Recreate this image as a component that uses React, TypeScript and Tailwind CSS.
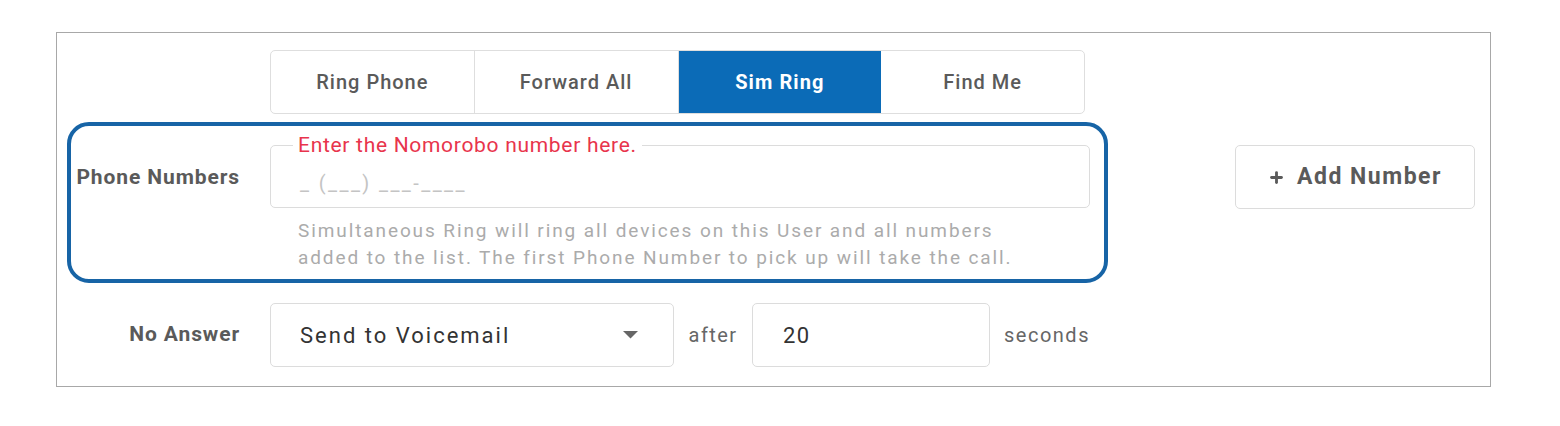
import { Plus } from "lucide-react";

const tabs = ["Ring Phone", "Forward All", "Sim Ring", "Find Me"];

export default function App() {
  return (
    <div className="min-h-screen bg-white pl-[56px] pt-[32px] font-['Roboto',sans-serif]">
      <div className="w-[1435px] h-[355px] border border-[#a8a8a8] bg-white">
        {/* Tabs */}
        <div className="mt-[17px] ml-[213px] flex w-[815px] h-[64px] rounded-[5px] border border-[#dedede] overflow-hidden">
          {tabs.map((t) => (
            <div
              key={t}
              className={
                t === "Sim Ring"
                  ? "flex-1 flex items-center justify-center bg-[#0b6bb7] text-white font-bold text-[20px] tracking-[1.1px]"
                  : "flex-1 flex items-center justify-center border-r border-[#dedede] last:border-r-0 text-[#5a5a5a] font-medium text-[20px] tracking-[1px]"
              }
            >
              {t}
            </div>
          ))}
        </div>

        {/* Phone numbers */}
        <div className="mt-[8px] flex items-start">
          <div className="ml-[10px] w-[1041px] h-[161px] rounded-[22px] border-[4px] border-[#1764a6] flex">
            <div className="w-[169px] pt-[36px] text-right text-[21px] font-bold tracking-[0.9px] text-[#5a5a5a]">
              Phone Numbers
            </div>
            <div className="ml-[30px] pt-[19px] w-[820px]">
              <div className="relative h-[63px] rounded-[5px] border border-[#dcdcdc] flex items-center pl-[29px] pt-[12px] text-[20px] tracking-[2.4px] text-[#c4c4c4]">
                <span className="absolute left-[22px] -top-[15px] bg-white px-[5px] text-[21px] leading-[28px] tracking-[0.7px] text-[#e8344c]">
                  Enter the Nomorobo number here.
                </span>
                _ (___) ___-____
              </div>
              <p className="mt-[9px] ml-[28px] text-[19px] leading-[27px] text-[#ababab] tracking-[1.9px]">
                Simultaneous Ring will ring all devices on this User and all numbers
                <br />
                added to the list. The first Phone Number to pick up will take the call.
              </p>
            </div>
          </div>
          <button className="ml-[127px] mt-[23px] w-[240px] h-[64px] rounded-[5px] border border-[#dcdcdc] bg-white flex items-center justify-center gap-[12px] text-[23px] font-bold tracking-[1.5px] text-[#5a5a5a]">
            <Plus className="w-[17px] h-[17px]" strokeWidth={4} />
            Add Number
          </button>
        </div>

        {/* No answer */}
        <div className="mt-[20px] ml-[14px] flex items-center h-[64px]">
          <div className="w-[169px] text-right text-[21px] font-bold tracking-[0.9px] text-[#5a5a5a]">No Answer</div>
          <div className="ml-[30px] w-[404px] h-[64px] rounded-[5px] border border-[#dcdcdc] flex items-center pl-[29px] pr-[35px] text-[22px] tracking-[2px] text-[#333]">
            <span className="flex-1">Send to Voicemail</span>
            <svg width="15" height="8" viewBox="0 0 15 8">
              <path d="M0 0 L15 0 L7.5 7.5 Z" fill="#666" />
            </svg>
          </div>
          <div className="w-[78px] text-center text-[20px] tracking-[1.4px] text-[#666]">after</div>
          <div className="w-[238px] h-[64px] rounded-[5px] border border-[#dcdcdc] flex items-center pl-[30px] text-[22px] tracking-[1.5px] text-[#333]">
            20
          </div>
          <div className="ml-[14px] text-[20px] tracking-[1.5px] text-[#666]">seconds</div>
        </div>
      </div>
    </div>
  );
}
